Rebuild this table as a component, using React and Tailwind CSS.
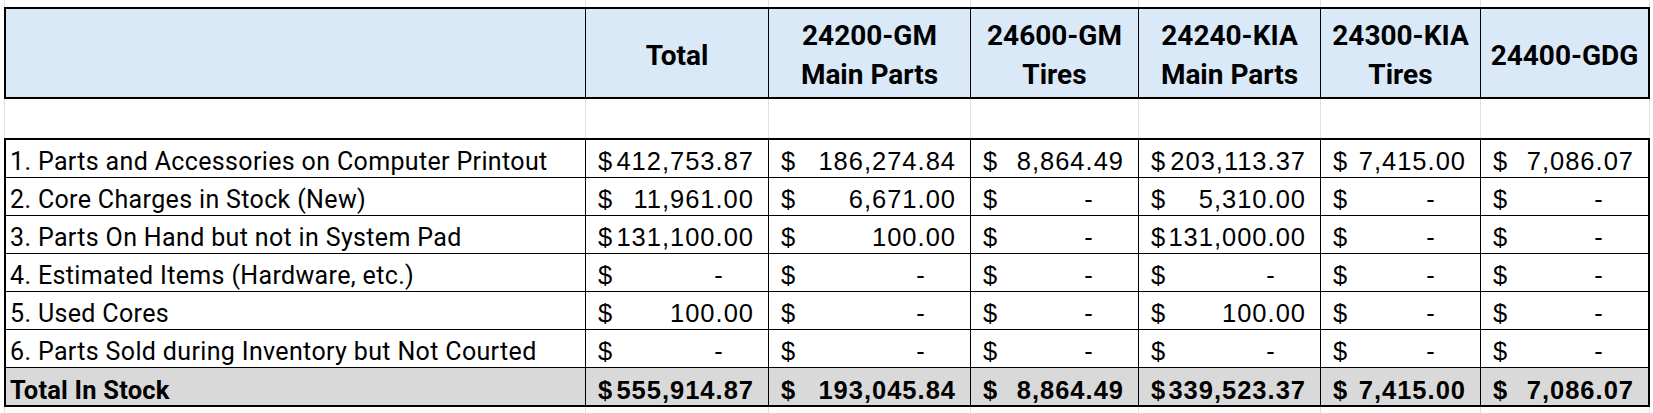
import React from 'react';

const cols = "grid grid-cols-[579px_183px_202px_168px_182px_160px_168px]";

const headers = [
  ["Total"],
  ["24200-GM", "Main Parts"],
  ["24600-GM", "Tires"],
  ["24240-KIA", "Main Parts"],
  ["24300-KIA", "Tires"],
  ["24400-GDG"],
];

const rows = [
  ["1. Parts and Accessories on Computer Printout", ["412,753.87", "186,274.84", "8,864.49", "203,113.37", "7,415.00", "7,086.07"]],
  ["2. Core Charges in Stock (New)", ["11,961.00", "6,671.00", null, "5,310.00", null, null]],
  ["3. Parts On Hand but not in System Pad", ["131,100.00", "100.00", null, "131,000.00", null, null]],
  ["4. Estimated Items (Hardware, etc.)", [null, null, null, null, null, null]],
  ["5. Used Cores", ["100.00", null, null, "100.00", null, null]],
  ["6. Parts Sold during Inventory but Not Courted", [null, null, null, null, null, null]],
];

const totals = ["555,914.87", "193,045.84", "8,864.49", "339,523.37", "7,415.00", "7,086.07"];

function Money({ value, bold }) {
  return (
    <div className={`flex items-center justify-between border-l border-black pl-[12px] pr-[14px] pt-[2px] font-['Liberation_Sans',Arial,sans-serif] text-[25.5px] tracking-[1px] text-black ${bold ? 'font-bold' : ''}`}>
      <span>$</span>
      {value ? (
        <span>{value}</span>
      ) : (
        <span>-<span className="invisible">00</span></span>
      )}
    </div>
  );
}

function GridStrip({ height }) {
  return (
    <div className={`${cols} w-[1646px] ${height} border-x border-[#e1e1e1] px-[1px]`}>
      <div />
      {headers.map((_, i) => (
        <div key={i} className="border-l border-[#e1e1e1]" />
      ))}
    </div>
  );
}

export default function App() {
  return (
    <div className="w-[1653px] h-[413px] overflow-hidden bg-white pl-[4px]">
      <GridStrip height="h-[7px]" />

      <div className={`${cols} w-[1646px] h-[92px] border-2 border-black bg-[#dae9f8]`}>
        <div />
        {headers.map((lines, i) => (
          <div
            key={i}
            className="flex flex-col items-center justify-center border-l border-black pt-[4px] font-['Roboto',sans-serif] text-[28px] font-bold leading-[39px] text-black"
          >
            {lines.map((l) => (
              <span key={l}>{l}</span>
            ))}
          </div>
        ))}
      </div>

      <GridStrip height="h-[39px]" />

      <div className="w-[1646px] border-2 border-black">
        {rows.map(([label, values], r) => (
          <div key={label} className={`${cols} ${r === 0 ? 'h-[37px]' : 'h-[38px] border-t border-black'}`}>
            <div className="flex items-center pl-[4px] pt-[3px] font-['Roboto',sans-serif] text-[25px] tracking-[0.35px] text-black">
              {label}
            </div>
            {values.map((v, i) => (
              <Money key={i} value={v} />
            ))}
          </div>
        ))}
        <div className={`${cols} h-[38px] border-t border-black bg-[#d9d9d9]`}>
          <div className="flex items-center pl-[4px] pt-[3px] font-['Roboto',sans-serif] text-[25.5px] font-bold tracking-[0.2px] text-black">
            Total In Stock
          </div>
          {totals.map((v, i) => (
            <Money key={i} value={v} bold />
          ))}
        </div>
      </div>

      <GridStrip height="h-[6px]" />
    </div>
  );
}
